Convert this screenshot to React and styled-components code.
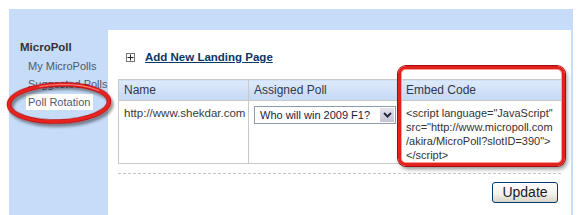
import React from "react";
import styled, { createGlobalStyle } from "styled-components";

const Global = createGlobalStyle`
  html, body { margin: 0; padding: 0; background: #ffffff; overflow: hidden; }
  body { font-family: "Liberation Sans", Arial, sans-serif; }
`;

const Page = styled.div`
  position: relative;
  width: 580px;
  height: 215px;
  padding: 9px 0 0 9px;
  box-sizing: border-box;
`;

const Frame = styled.div`
  display: flex;
  width: 564px;
  height: 206px;
  background: #c6dcf8;
`;

const Sidebar = styled.nav`
  width: 99px;
  flex: none;
  box-sizing: border-box;
  padding: 31px 0 0 11px;
`;

const SideTitle = styled.div`
  font-weight: bold;
  font-size: 11.5px;
  line-height: 14px;
  color: #333;
  margin-bottom: 4px;
`;

const SideItem = styled.div`
  margin-left: 6px;
  margin-bottom: 2px;
  padding: 1px 3px 1px 2px;
  width: fit-content;
  font-size: 11px;
  line-height: 14px;
  color: #4f5a6a;
  white-space: nowrap;
  background: ${(p) => (p.$active ? "#ffffff" : "transparent")};
`;

const Main = styled.main`
  margin-top: 21px;
  width: 463px;
  background: #fff;
  box-sizing: border-box;
  padding: 19px 10px 0 10px;
  display: flex;
  flex-direction: column;
`;

const AddRow = styled.div`
  display: flex;
  align-items: center;
  gap: 10px;
  padding-left: 8px;
  height: 16px;
`;

const PlusBox = styled.span`
  width: 7px;
  height: 7px;
  border: 1px solid #777;
  display: flex;
  align-items: center;
  justify-content: center;
  background: #fff;
`;

const AddLink = styled.a`
  font-weight: bold;
  font-size: 11.5px;
  color: #0b3566;
  text-decoration: underline;
  line-height: 14px;
`;

const Table = styled.table`
  margin-top: 14px;
  width: 443px;
  border-collapse: collapse;
  table-layout: fixed;
  border: 1px solid #c9c9c9;
`;

const Th = styled.th`
  text-align: left;
  font-weight: normal;
  font-size: 12px;
  line-height: 14px;
  color: #33384a;
  padding: 3px 5px 3px 5px;
  border: 1px solid #c9c9c9;
  background: linear-gradient(#deeafb, #c4d9f5);
`;

const Td = styled.td`
  vertical-align: top;
  font-size: 11.5px;
  line-height: 14px;
  color: #3a3a3a;
  padding: 5px 5px 1px 5px;
  height: 56px;
  border: 1px solid #c9c9c9;
  white-space: nowrap;
`;

const CodeLine = styled.div`
  font-size: 11px;
  line-height: 14px;
  color: #333;
  white-space: nowrap;
`;

const SelectBox = styled.div`
  display: flex;
  width: 142px;
  height: 18px;
  box-sizing: border-box;
  border: 1px solid #8a9cb0;
  background: #fff;
`;

const SelectText = styled.span`
  flex: 1;
  font-size: 11px;
  line-height: 16px;
  padding-left: 5px;
  color: #1b1b3a;
`;

const SelectBtn = styled.span`
  width: 16px;
  box-sizing: border-box;
  border: 1px solid #fff;
  background: linear-gradient(#e4e2ee, #c4c4d6);
  display: flex;
  align-items: center;
  justify-content: center;
`;

const Dashed = styled.div`
  margin-top: 9px;
  width: 443px;
  border-top: 1px dashed #c4c4c4;
`;

const ButtonRow = styled.div`
  display: flex;
  justify-content: flex-end;
  padding-right: 3px;
  margin-top: 8px;
`;

const Button = styled.button`
  width: 66px;
  height: 21px;
  border: 1px solid #003c74;
  border-radius: 3px;
  background: linear-gradient(#ffffff 0%, #f2f1ea 60%, #d8d3c6 100%);
  font-family: "Liberation Sans", Arial, sans-serif;
  font-size: 14px;
  color: #1a1a2a;
  padding: 0;
  line-height: 19px;
`;

const EllipseMark = styled.svg`
  position: absolute;
  left: 3px;
  top: 79px;
  overflow: visible;
`;

const BoxMark = styled.div`
  position: absolute;
  left: 398px;
  top: 66px;
  width: 167px;
  height: 100px;
  box-sizing: border-box;
  border: 3px solid #e2221e;
  border-radius: 8px;
  box-shadow: inset 0 0 0 1px #ff9c9c, 0 0 0 1px #a40d0d, 2px 3px 4px rgba(0, 0, 0, 0.45);
`;

export default function App() {
  return (
    <>
      <Global />
      <Page>
        <Frame>
          <Sidebar>
            <SideTitle>MicroPoll</SideTitle>
            <SideItem>My MicroPolls</SideItem>
            <SideItem>Suggested Polls</SideItem>
            <SideItem $active>Poll Rotation</SideItem>
          </Sidebar>
          <Main>
            <AddRow>
              <PlusBox>
                <svg width="7" height="7" viewBox="0 0 7 7">
                  <path d="M0.5 3.5h6M3.5 0.5v6" stroke="#222" strokeWidth="1" />
                </svg>
              </PlusBox>
              <AddLink>Add New Landing Page</AddLink>
            </AddRow>
            <Table>
              <colgroup>
                <col style={{ width: 130 }} />
                <col style={{ width: 152 }} />
                <col style={{ width: 161 }} />
              </colgroup>
              <thead>
                <tr>
                  <Th>Name</Th>
                  <Th>Assigned Poll</Th>
                  <Th>Embed Code</Th>
                </tr>
              </thead>
              <tbody>
                <tr>
                  <Td>http://www.shekdar.com</Td>
                  <Td>
                    <SelectBox>
                      <SelectText>Who will win 2009 F1?</SelectText>
                      <SelectBtn>
                        <svg width="9" height="6" viewBox="0 0 9 6">
                          <path d="M1 1l3.5 3.5L8 1" stroke="#2a2a3a" strokeWidth="2" fill="none" />
                        </svg>
                      </SelectBtn>
                    </SelectBox>
                  </Td>
                  <Td>
                    <CodeLine>&lt;script language="JavaScript"</CodeLine>
                    <CodeLine>src="http://www.micropoll.com</CodeLine>
                    <CodeLine>/akira/MicroPoll?slotID=390"&gt;</CodeLine>
                    <CodeLine>&lt;/script&gt;</CodeLine>
                  </Td>
                </tr>
              </tbody>
            </Table>
            <Dashed />
            <ButtonRow>
              <Button>Update</Button>
            </ButtonRow>
          </Main>
        </Frame>
        <EllipseMark width="112" height="50" viewBox="0 0 112 50">
          <defs>
            <filter id="sh" x="-20%" y="-30%" width="140%" height="170%">
              <feDropShadow dx="2" dy="3" stdDeviation="1.6" floodColor="#000" floodOpacity="0.45" />
            </filter>
          </defs>
          <g transform="rotate(-2 56 24)">
            <ellipse cx="56" cy="24" rx="50" ry="18.5" fill="none" stroke="#b30d0d" strokeWidth="4.5" filter="url(#sh)" />
            <ellipse cx="56" cy="24" rx="50" ry="18.5" fill="none" stroke="#e8231f" strokeWidth="3" />
            <ellipse cx="56" cy="23.6" rx="50" ry="18" fill="none" stroke="#ff9a9a" strokeWidth="0.8" strokeDasharray="60 200" strokeDashoffset="-150" />
          </g>
        </EllipseMark>
        <BoxMark />
      </Page>
    </>
  );
}
